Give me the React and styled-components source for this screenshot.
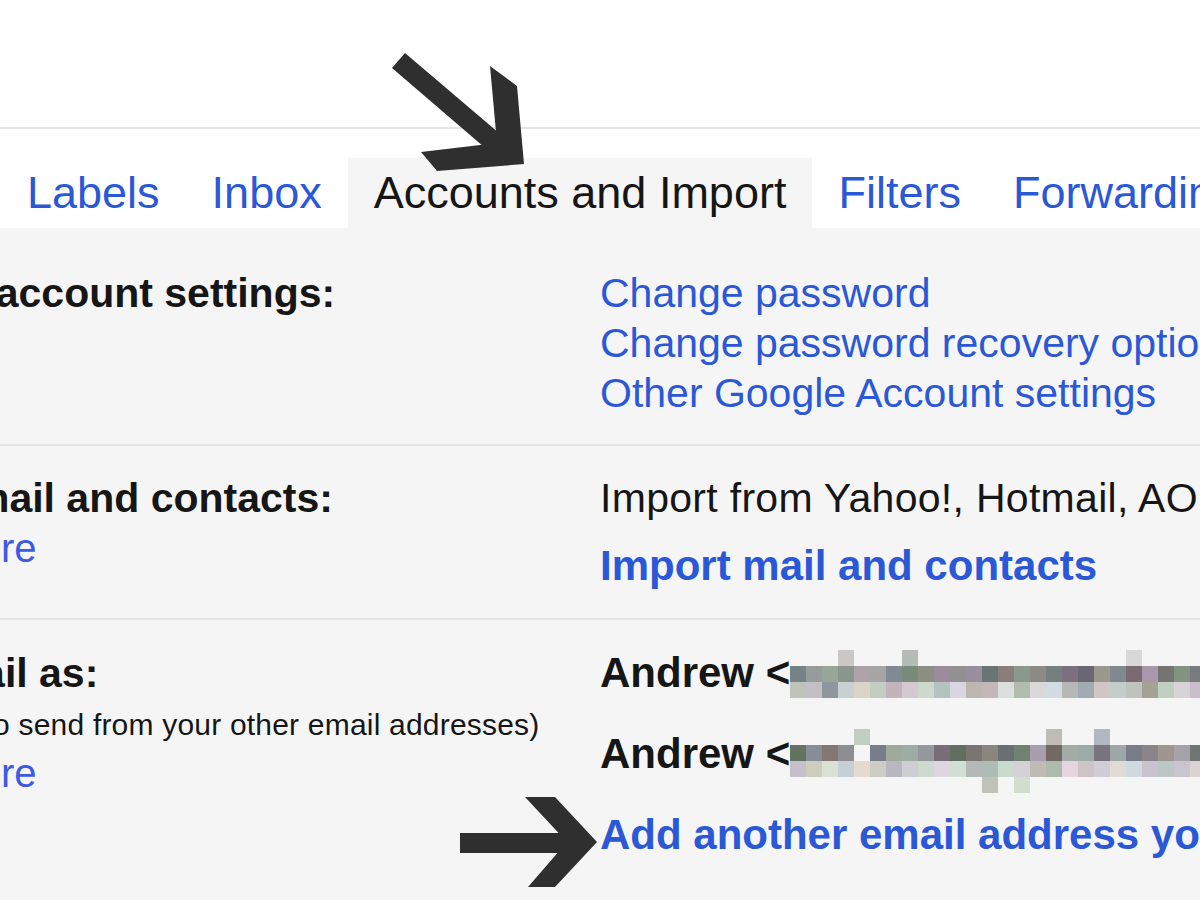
import React from 'react';
import styled, { createGlobalStyle } from 'styled-components';

const GlobalStyle = createGlobalStyle`
  html, body {
    margin: 0;
    padding: 0;
    background: #ffffff;
    overflow: hidden;
  }
  body {
    font-family: "Liberation Sans", Arial, sans-serif;
    color: #161616;
  }
`;

const LINK = '#2a58d6';

const Page = styled.div`
  position: relative;
  width: 1200px;
  height: 900px;
  overflow: hidden;
  display: flex;
  flex-direction: column;
`;

const Header = styled.div`
  height: 127px;
  background: #ffffff;
  border-bottom: 2px solid #e6e6e6;
`;

const TabBar = styled.nav`
  display: flex;
  padding: 29px 0 0 1px;
  background: #ffffff;
  white-space: nowrap;
`;

const Tab = styled.a`
  display: block;
  height: 70px;
  padding: 0 26px;
  font-size: 45px;
  line-height: 70px;
  color: ${p => (p.$active ? '#161616' : LINK)};
  background: ${p => (p.$active ? '#f5f5f5' : 'transparent')};
  text-decoration: none;
  flex-shrink: 0;
`;

const Content = styled.div`
  flex: 1;
  background: #f5f5f5;
`;

// the screenshot is a crop: the label column starts left of the window
const Table = styled.div`
  margin-left: -166px;
  width: 1366px;
`;

const Row = styled.div`
  display: grid;
  grid-template-columns: 766px 1fr;
  padding: ${p => p.$pad};
  border-bottom: ${p => (p.$last ? 'none' : '2px solid #e4e4e4')};
`;

const LabelCol = styled.div`
  display: flex;
  flex-direction: column;
  white-space: nowrap;
`;

const Label = styled.div`
  font-size: 41px;
  font-weight: 700;
  line-height: 50px;
`;

const Hint = styled.div`
  font-size: 30px;
  line-height: 46px;
  margin-top: 4px;
  margin-left: -10px;
  letter-spacing: 0.2px;
`;

const SmallLink = styled.a`
  font-size: 40px;
  line-height: 50px;
  margin-left: -2px;
  color: #3d5ae2;
  text-decoration: none;
`;

const ValueCol = styled.div`
  display: flex;
  flex-direction: column;
  gap: ${p => p.$gap || '0px'};
  white-space: nowrap;
`;

const Link = styled.a`
  display: block;
  font-size: ${p => (p.$bold ? '42px' : '41px')};
  font-weight: ${p => (p.$bold ? 700 : 400)};
  line-height: 50px;
  color: ${LINK};
  text-decoration: none;
  margin-top: ${p => p.$top || '0px'};
`;

const Text = styled.div`
  font-size: 41px;
  line-height: 50px;
  letter-spacing: 0.3px;
`;

const Address = styled.div`
  display: flex;
  align-items: flex-start;
  height: 50px;
`;

const Name = styled.span`
  font-size: 42px;
  font-weight: 700;
  line-height: 50px;
`;

const Overlay = styled.svg`
  position: absolute;
  left: 0;
  top: 0;
  pointer-events: none;
`;

function rng(seed) {
  let s = seed >>> 0;
  return () => {
    s = (s + 0x6d2b79f5) >>> 0;
    let t = s;
    t = Math.imul(t ^ (t >>> 15), t | 1);
    t ^= t + Math.imul(t ^ (t >>> 7), t | 61);
    return ((t ^ (t >>> 14)) >>> 0) / 4294967296;
  };
}

// pixelated (censored) email address
function Blur({ seed, rows, offset = 0 }) {
  const r = rng(seed);
  const cols = 27;
  const size = 16;
  const cells = [];
  rows.forEach((kind, y) => {
    for (let x = 0; x < cols; x++) {
      let lo;
      let hi;
      if (kind === 'sparse') {
        if (r() > 0.22) { r(); continue; }
        lo = 170; hi = 225;
      } else if (kind === 'tail') {
        if (x < 10 || x > 14 || r() > 0.6) { r(); continue; }
        lo = 175; hi = 225;
      } else if (kind === 'dark') {
        if (r() < 0.04) continue;
        lo = 105; hi = 170;
      } else {
        lo = r() < 0.15 ? 140 : 180; hi = 222;
      }
      const l = lo + r() * (hi - lo);
      const dr = (r() - 0.5) * 24;
      const db = (r() - 0.5) * 24;
      const c = (v) => Math.max(0, Math.min(255, Math.round(v)));
      cells.push(
        <rect
          key={`${x}-${y}`}
          x={x * size}
          y={y * size}
          width={size}
          height={size}
          fill={`rgb(${c(l + dr)},${c(l - (dr + db) / 3)},${c(l + db)})`}
        />
      );
    }
  });
  return (
    <svg
      width={cols * size}
      height={rows.length * size}
      style={{ marginTop: offset, flexShrink: 0 }}
      shapeRendering="crispEdges"
    >
      {cells}
    </svg>
  );
}

const tabs = ['Labels', 'Inbox', 'Accounts and Import', 'Filters', 'Forwarding and POP/IMAP', 'Chat'];

export default function App() {
  return (
    <>
      <GlobalStyle />
      <Page>
        <Header />
        <TabBar>
          {tabs.map(t => (
            <Tab key={t} $active={t === 'Accounts and Import'}>{t}</Tab>
          ))}
        </TabBar>
        <Content>
          <Table>
            <Row $pad="40px 0 26px">
              <LabelCol>
                <Label>Change account settings:</Label>
              </LabelCol>
              <ValueCol>
                <Link>Change password</Link>
                <Link>Change password recovery options</Link>
                <Link>Other Google Account settings</Link>
              </ValueCol>
            </Row>
            <Row $pad="27px 0 27px">
              <LabelCol>
                <Label>Import mail and contacts:</Label>
                <SmallLink>Learn more</SmallLink>
              </LabelCol>
              <ValueCol>
                <Text>Import from Yahoo!, Hotmail, AOL, or other webmail or POP3 accounts.</Text>
                <Link $bold $top="18px">Import mail and contacts</Link>
              </ValueCol>
            </Row>
            <Row $pad="28px 0 0" $last>
              <LabelCol>
                <Label>Send mail as:</Label>
                <Hint>(Use Gmail to send from your other email addresses)</Hint>
                <SmallLink>Learn more</SmallLink>
              </LabelCol>
              <ValueCol $gap="31px">
                <Address>
                  <Name>Andrew &lt;</Name>
                  <Blur seed={11} rows={['sparse', 'dark', 'light']} offset={2} />
                </Address>
                <Address>
                  <Name>Andrew &lt;</Name>
                  <Blur seed={47} rows={['sparse', 'dark', 'light', 'tail']} />
                </Address>
                <Link $bold>Add another email address you own</Link>
              </ValueCol>
            </Row>
          </Table>
        </Content>

        <Overlay width="1200" height="900" viewBox="0 0 1200 900">
          <g fill="#2f2f2f">
            <polygon points="392,68 405,53 506,139 491,153" />
            <polygon points="490,66 517,86 524,164 437,171 421,152 497,143" />
            <rect x="460" y="833" width="110" height="20" />
            <polygon points="525,797 555,797 597,842 555,887 528,887 567,842" />
          </g>
        </Overlay>
      </Page>
    </>
  );
}
